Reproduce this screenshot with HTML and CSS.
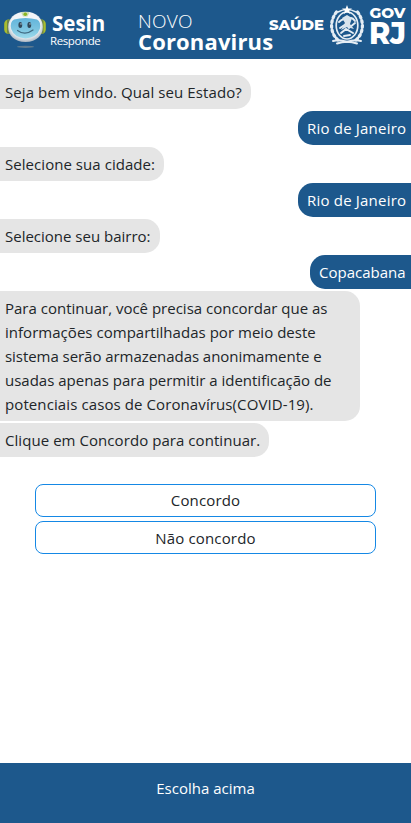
FILE: index.html
```html
<!DOCTYPE html>
<html lang="pt-BR">
<head>
<meta charset="utf-8">
<meta name="viewport" content="width=device-width, initial-scale=1">
<title>Sesin Responde</title>
<link rel="stylesheet" href="styles.css">
</head>
<body>
<header class="header">
  <svg class="robot" viewBox="0 0 42 40" aria-hidden="true">
    <defs>
      <radialGradient id="shell" cx=".5" cy=".42" r=".6"><stop offset=".7" stop-color="#f3f5f8"/><stop offset="1" stop-color="#a3afbb"/></radialGradient>
      <linearGradient id="face" x1="0" y1="0" x2="0" y2="1"><stop offset="0" stop-color="#62b5dc"/><stop offset=".55" stop-color="#7cc4e0"/><stop offset="1" stop-color="#9edced"/></linearGradient>
    </defs>
    <ellipse cx="21.500" cy="36.800" rx="8.500" ry="1.100" fill="#6d8290" opacity=".8"/>
    <rect x=".2" y="9.500" width="9" height="14.500" rx="4.500" fill="#a9bd2e"/>
    <rect x="32.800" y="9.500" width="9" height="14.500" rx="4.500" fill="#a9bd2e"/>
    <rect x="3" y="9.500" width="3" height="14.500" rx="1.500" fill="#6f8748"/>
    <rect x="36.500" y="9.500" width="3" height="14.500" rx="1.500" fill="#6f8748"/>
    <path d="M21.500 1.800C33 1.800 38.800 9 38.800 17S33 32 21.500 32 4.200 25 4.200 17 10 1.800 21.500 1.800Z" fill="url(#shell)"/>
    <path d="M10 9.500Q21.500 6.500 33 9.500Q37.500 12 35.800 19Q33 27.500 21.500 28.500Q10 27.500 7.200 19Q5.500 12 10 9.500Z" fill="url(#face)"/>
    <path d="M17 2.300Q21 1.500 25.500 2.300L23.500 6.500H19Z" fill="#c8ddb0"/>
    <circle cx="21.300" cy="4.300" r="1.800" fill="#8bb523"/>
    <ellipse cx="16.300" cy="15" rx="1.900" ry="2.900" fill="#304758"/>
    <ellipse cx="25.300" cy="15" rx="1.900" ry="2.900" fill="#304758"/>
    <circle cx="17" cy="13.900" r=".7" fill="#d5eef7"/><circle cx="26" cy="13.900" r=".7" fill="#d5eef7"/>
    <path d="M13.500 20.500Q21 26 29 20" fill="none" stroke="#416b83" stroke-width="1.200" stroke-linecap="round"/>
  </svg>
  <div class="brand">
    <strong class="brand-name">Sesin</strong>
    <span class="brand-sub">Responde</span>
  </div>
  <div class="topic">
    <span class="topic-kicker">NOVO</span>
    <strong class="topic-name">Coronavirus</strong>
  </div>
  <svg class="gov" viewBox="0 0 142 59">
    <g fill="#fff" class="gov-text">
      <text x="0" y="30" font-size="14.500" textLength="55" lengthAdjust="spacingAndGlyphs">SAÚDE</text>
      <text x="100.500" y="18" font-size="14.500" textLength="36" lengthAdjust="spacingAndGlyphs">GOV</text>
      <text x="100" y="44" font-size="31" textLength="37" lengthAdjust="spacingAndGlyphs">RJ</text>
    </g>
    <g fill="none" stroke="#e5edf4" stroke-linecap="round">
      <path d="M67.500 12C60.500 21 61 33 69 40M88.500 12C95.500 21 95 33 87 40" stroke-width="3.200" stroke-dasharray="2 2.800"/>
      <ellipse cx="78" cy="25.500" rx="10.800" ry="13.500" stroke-width="1.700"/>
      <path d="M69 12Q78 7 87 12" stroke-width="1.500"/>
      <path d="M70 22Q75 17 78 21Q82 15 86 21M71 28L77 24L80 28L86 23M72 33L77 29L84 33M75 36L81 35" stroke-width="1.900"/>
      <path d="M64 41Q71 39 78 42Q85 39 92 41M68 43.500Q78 40 88 43.500" stroke-width="2"/>
    </g>
    <path d="M78 5L79.300 8.500H83L80 10.700L81.200 14L78 12L74.800 14L76 10.700L73 8.500H76.700Z" fill="#fff"/>
    <path d="M73 18L78 15L83 18L81 24L85 29L78 27L72 30L76 23Z" fill="#d9e4ed"/>
  </svg>
</header>
<main class="chat">
  <p class="bubble bot l1">Seja bem vindo. Qual seu Estado?</p>
  <p class="bubble user rio">Rio de Janeiro</p>
  <p class="bubble bot l2">Selecione sua cidade:</p>
  <p class="bubble user rio">Rio de Janeiro</p>
  <p class="bubble bot l3">Selecione seu bairro:</p>
  <p class="bubble user copa">Copacabana</p>
  <p class="bubble bot terms">Para continuar, você precisa concordar que as<br><span class="line-wide">informações compartilhadas por meio deste</span><br><span class="line-tight">sistema serão armazenadas anonimamente e</span><br>usadas apenas para permitir a identificação de<br><span class="line-covid">potenciais casos de Coronavírus(COVID-19).</span></p>
  <p class="bubble bot l4">Clique em Concordo para continuar.</p>
  <div class="options">
    <button class="option first" type="button">Concordo</button>
    <button class="option" type="button">Não concordo</button>
  </div>
</main>
<footer class="footer">Escolha acima</footer>
</body>
</html>
```
FILE: styles.css
```css
* { box-sizing: border-box; }
body {
  margin: 0;
  height: 823px;
  display: flex;
  flex-direction: column;
  overflow: hidden;
  background: #fff;
  color: #212529;
  font: 15px/24px "Segoe UI", "Open Sans", "Noto Sans", sans-serif;
}
.header {
  flex: none;
  display: flex;
  height: 59px;
  background: #1d588c;
  color: #fff;
  white-space: nowrap;
}
.robot { flex: none; width: 42px; height: 40px; margin: 10px 0 0 4px; }
.brand { flex: none; width: 88px; padding-top: 11px; margin-left: 4px; }
.brand-name { display: block; margin-left: 2px; font-size: 20.500px; line-height: 24px; }
.brand-sub { display: block; font-size: 11.500px; line-height: 12px; letter-spacing: -.4px; }
.topic { flex: none; width: 131px; padding-top: 9px; }
.topic-kicker { display: block; font-size: 19px; font-weight: 300; line-height: 24px; letter-spacing: .3px; }
.topic-name { display: block; font-size: 22px; line-height: 17px; letter-spacing: .15px; }
.gov { flex: none; width: 142px; height: 59px; }
.gov-text { font-family: "Montserrat", "Open Sans", sans-serif; font-weight: 800; }
.chat {
  flex: 1;
  display: flex;
  flex-direction: column;
  gap: 2px;
  padding-top: 16px;
}
.bubble { margin: 0; padding: 5px; white-space: nowrap; }
.bot {
  align-self: flex-start;
  padding-right: 9px;
  background: #e5e5e5;
  border-radius: 0 15px 15px 0;
}
.user {
  align-self: flex-end;
  padding-left: 9px;
  background: #1d588c;
  color: #fff;
  border-radius: 15px 0 0 15px;
}
.l1 { width: 251px; letter-spacing: .09px; }
.l2 { width: 164px; letter-spacing: .05px; }
.l3 { width: 160px; }
.l4 { width: 269px; letter-spacing: .06px; }
.rio { width: 113px; letter-spacing: .2px; }
.copa { width: 101px; }
.terms { width: 360px; }
.line-wide { letter-spacing: .03px; }
.line-tight { letter-spacing: -.05px; }
.line-covid { letter-spacing: .1px; }
.options { display: flex; flex-direction: column; gap: 4px; padding: 25px 35px 0; }
.option {
  height: 33px;
  padding: 0;
  border: 1px solid #1588e5;
  border-radius: 8px;
  background: #fff;
  color: inherit;
  font: inherit;
  letter-spacing: .15px;
}
.first { padding-bottom: 2px; }
.footer {
  flex: none;
  height: 60px;
  padding-top: 13px;
  background: #1d588c;
  color: #fff;
  text-align: center;
}
```
